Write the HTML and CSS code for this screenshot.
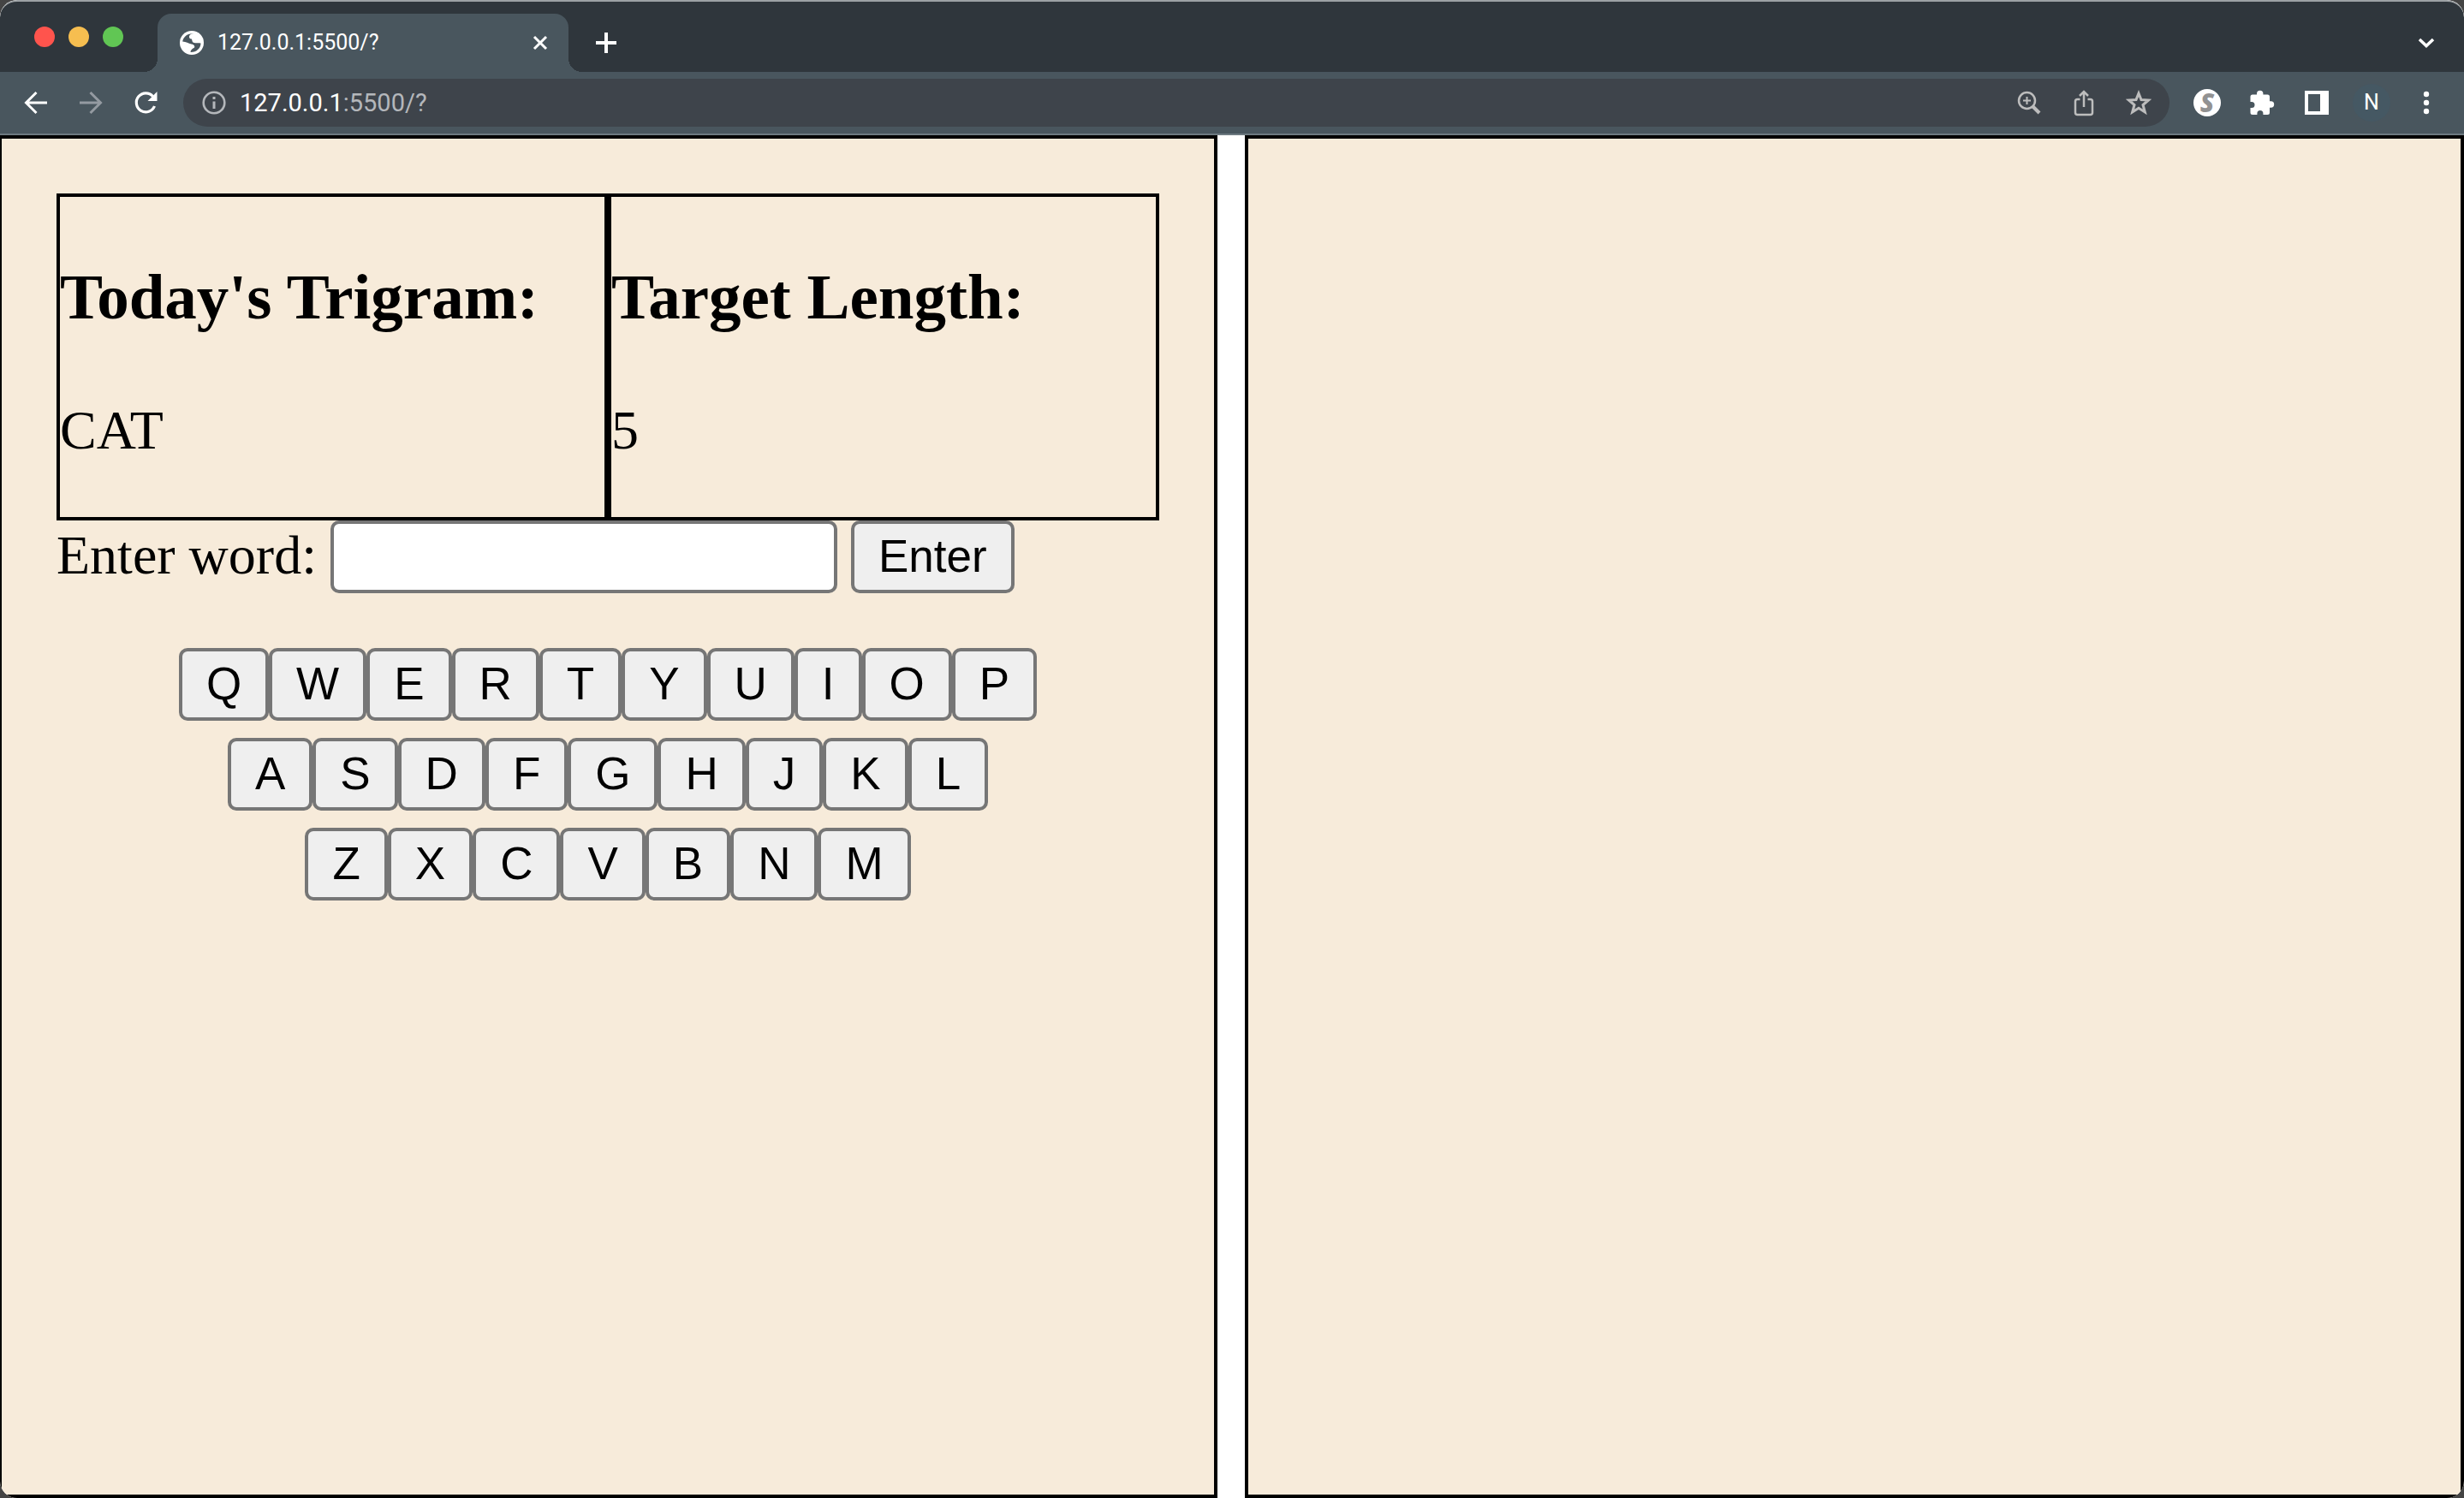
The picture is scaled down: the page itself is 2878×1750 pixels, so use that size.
FILE: index.html
```html
<!DOCTYPE html>
<html lang="en">
<head>
<meta charset="utf-8">
<title>127.0.0.1:5500/?</title>
<link rel="stylesheet" href="styles.css">
</head>
<body>
<div class="window">
  <header class="tabstrip">
    <div class="lights">
      <button class="light light-close" aria-label="Close window"></button>
      <button class="light light-min" aria-label="Minimize window"></button>
      <button class="light light-max" aria-label="Zoom window"></button>
    </div>
    <div class="tab">
      <svg class="globe" viewBox="0 0 28 28" aria-hidden="true"><circle cx="14" cy="14" r="14" fill="#fff"/><path d="M16.500 3.200C13.500 3.200 11.500 4 11 6.500C10.800 8 11.500 9.500 13.500 9.500C14.500 9.500 14 12 15.500 13.500C17.500 15 20.500 13.500 24.500 14.500C24.500 20 20 25 12.500 25C12.500 22.500 14.500 21 16.500 20C18.500 18.500 16.500 15.800 13.500 15.500C10 15 7.500 12.500 3.200 12.500C4 7 9 2.500 16.500 3.200Z" fill="#49565e"/></svg>
      <span class="tab-title">127.0.0.1:5500/?</span>
      <button class="icon-button tab-close" aria-label="Close tab"><svg width="18" height="18" viewBox="0 0 18 18"><path d="M2 2L16 16M16 2L2 16" stroke="#fff" stroke-width="3" fill="none"/></svg></button>
    </div>
    <button class="icon-button cell" aria-label="New tab"><svg width="24" height="24" viewBox="0 0 24 24"><path d="M12 0V24M0 12H24" stroke="#fff" stroke-width="4" fill="none"/></svg></button>
    <button class="icon-button cell tab-search" aria-label="Search tabs"><svg width="20" height="12" viewBox="0 0 20 12"><path d="M2 2L10 9.500L18 2" stroke="#fff" stroke-width="3.500" fill="none"/></svg></button>
  </header>

  <nav class="toolbar" aria-label="Browser">
    <div class="tools">
      <button class="icon-button cell" aria-label="Back"><svg width="28" height="28" viewBox="0 0 28 28"><path d="M27 14H3M14.500 2L2.500 14L14.500 26" stroke="#fff" stroke-width="3" fill="none"/></svg></button>
      <button class="icon-button cell" aria-label="Forward"><svg width="28" height="28" viewBox="0 0 28 28"><path d="M1 14H25M13.500 2L25.500 14L13.500 26" stroke="#949aa1" stroke-width="3" fill="none"/></svg></button>
      <button class="icon-button cell" aria-label="Reload"><svg width="28" height="28" viewBox="0 0 28 28"><path d="M22.500 6.500A11 11 0 1 0 24.500 18" stroke="#fff" stroke-width="3.200" fill="none"/><path d="M27.500 1V12H16.500Z" fill="#fff"/></svg></button>
    </div>
    <div class="omnibox">
      <svg width="28" height="28" viewBox="0 0 28 28" aria-hidden="true"><circle cx="14" cy="14" r="12.300" stroke="#b4b7bb" stroke-width="2.600" fill="none"/><path d="M14 12.500V21M14 7V10" stroke="#b4b7bb" stroke-width="3"/></svg>
      <div class="url" role="textbox" aria-label="Address" contenteditable="true" spellcheck="false"><span class="url-host">127.0.0.1</span>:5500/?</div>
      <button class="icon-button cell" aria-label="Zoom"><svg width="28" height="28" viewBox="0 0 28 28"><circle cx="11.500" cy="11.500" r="9.500" stroke="#bdbdbd" stroke-width="2.500" fill="none"/><path d="M11.500 7V16M7 11.500H16" stroke="#bdbdbd" stroke-width="2"/><path d="M18.500 18.500L26 26" stroke="#bdbdbd" stroke-width="4"/></svg></button>
      <button class="icon-button cell" aria-label="Share"><svg width="28" height="32" viewBox="0 0 28 32"><path d="M9.500 12H6.500Q4 12 4 14.500V27.500Q4 30 6.500 30H21.500Q24 30 24 27.500V14.500Q24 12 21.500 12H18.500M14 21V4M9 8L14 3L19 8" stroke="#bdbdbd" stroke-width="2.500" fill="none"/></svg></button>
      <button class="icon-button cell" aria-label="Bookmark"><svg width="30" height="30" viewBox="0 0 30 30"><path d="M15 4L18 11.500L26.500 12L20 17.500L22.300 26L15 21.300L7.700 26L10 17.500L3.500 12L12 11.500Z" stroke="#bdbdbd" stroke-width="3" fill="none"/></svg></button>
    </div>
    <div class="tools">
      <button class="icon-button cell" aria-label="S extension"><span class="s-badge">S</span></button>
      <button class="icon-button cell" aria-label="Extensions"><svg width="30" height="30" viewBox="0 0 30 30"><path d="M9 4.500A3.700 3.700 0 0 1 16.400 4.500V5.500H21.500Q24 5.500 24 8V13.300H25.500A3.700 3.700 0 0 1 25.500 20.700H24V26.500Q24 29 21.500 29H16.400V27.500A3.500 3.500 0 0 0 9.400 27.500V29H4Q1.500 29 1.500 26.500V21H3A3.500 3.500 0 0 0 3 14H1.500V8Q1.500 5.500 4 5.500H9Z" fill="#fff"/></svg></button>
      <button class="icon-button cell" aria-label="Side panel"><svg width="28" height="28" viewBox="0 0 28 28"><path fill-rule="evenodd" d="M0 0H28V28H0ZM4 4V24H18V4Z" fill="#fff"/></svg></button>
      <button class="icon-button cell" aria-label="Profile"><span class="avatar">N</span></button>
      <button class="icon-button cell" aria-label="Menu"><svg width="8" height="28" viewBox="0 0 8 28"><g fill="#fff"><circle cx="4" cy="4" r="3.200"/><circle cx="4" cy="14" r="3.200"/><circle cx="4" cy="24" r="3.200"/></g></svg></button>
    </div>
  </nav>

  <main class="page">
    <section class="panel">
      <div class="facts">
        <div class="fact"><h3>Today's Trigram:</h3><p>CAT</p></div>
        <div class="fact"><h3>Target Length:</h3><p>5</p></div>
      </div>
      <form class="entry">
        <label for="word">Enter word:</label>
        <input class="word" id="word" type="text">
        <button class="key">Enter</button>
      </form>
      <div class="keyboard">
        <div class="key-row"><button class="key">Q</button><button class="key">W</button><button class="key">E</button><button class="key">R</button><button class="key">T</button><button class="key">Y</button><button class="key">U</button><button class="key">I</button><button class="key">O</button><button class="key">P</button></div>
        <div class="key-row"><button class="key">A</button><button class="key">S</button><button class="key">D</button><button class="key">F</button><button class="key">G</button><button class="key">H</button><button class="key">J</button><button class="key">K</button><button class="key">L</button></div>
        <div class="key-row"><button class="key">Z</button><button class="key">X</button><button class="key">C</button><button class="key">V</button><button class="key">B</button><button class="key">N</button><button class="key">M</button></div>
      </div>
    </section>
    <section class="panel"></section>
  </main>
</div>
</body>
</html>
```

FILE: styles.css
```css
* { box-sizing: border-box; }

body {
  margin: 0;
  background: #444;
  font-family: "Liberation Serif", "Times New Roman", serif;
  font-size: 64px;
  line-height: 74px;
  color: #000;
}

.window {
  display: flex;
  flex-direction: column;
  min-height: 100vh;
  overflow: hidden;
  border-radius: 20px;
  background: #fff;
}

/* Browser chrome */
.tabstrip, .toolbar {
  display: flex;
  font-family: Roboto, "Liberation Sans", sans-serif;
  color: #fff;
}

.tabstrip {
  height: 84px;
  padding: 14px 12px 0 40px;
  border-top: 2px solid #9ca1a4;
  border-radius: 20px 20px 0 0;
  background: #2f363c;
}

.lights {
  display: flex;
  gap: 16px;
  width: 144px;
  padding-top: 15px;
}

.light {
  width: 24px;
  height: 24px;
  padding: 0;
  border: 0;
  border-radius: 50%;
}

.light-close { background: #ff544d; }
.light-min { background: #f6be50; }
.light-max { background: #61c654; }

.tab {
  position: relative;
  display: flex;
  align-items: center;
  gap: 16px;
  width: 480px;
  height: 68px;
  padding: 0 24px 0 26px;
  border-radius: 16px 16px 0 0;
  background: #49565e;
}

/* Flared feet where the tab meets the toolbar */
.tab::before, .tab::after {
  content: "";
  position: absolute;
  bottom: 0;
  width: 16px;
  height: 16px;
}

.tab::before {
  right: 100%;
  background: radial-gradient(circle at 0 0, #2f363c 16px, #49565e 16px);
}

.tab::after {
  left: 100%;
  background: radial-gradient(circle at 100% 0, #2f363c 16px, #49565e 16px);
}

.globe { width: 28px; height: 28px; }

.tab-title {
  flex: 1;
  font-size: 25px;
  font-weight: 400;
  line-height: 32px;
}

.icon-button {
  display: flex;
  align-items: center;
  justify-content: center;
  padding: 0;
  border: 0;
  background: none;
  color: #fff;
  font-family: inherit;
}

.cell {
  flex: none;
  width: 64px;
}

.tabstrip .cell {
  height: 68px;
  margin-left: 12px;
}

.tabstrip .tab-search { margin-left: auto; }

.toolbar {
  align-items: center;
  gap: 12px;
  height: 74px;
  padding: 0 12px 0 10px;
  border-bottom: 2px solid #6d7a80;
  background: #49565e;
}

.tools {
  display: flex;
  align-items: center;
}

.omnibox {
  flex: 1;
  display: flex;
  align-items: center;
  height: 56px;
  padding: 0 4px 0 22px;
  border-radius: 28px;
  background: #3e444b;
}

.url {
  flex: 1;
  padding-left: 16px;
  font-size: 29px;
  line-height: 36px;
  color: #b4b7bb;
}

.url-host { color: #fff; }

.s-badge, .avatar {
  display: flex;
  align-items: center;
  justify-content: center;
  border-radius: 50%;
}

.s-badge {
  width: 32px;
  height: 32px;
  background: #fff;
  color: #929292;
  font: italic 800 30px/32px "Open Sans", sans-serif;
}

.avatar {
  width: 44px;
  height: 44px;
  background: #455863;
  font: 25px/32px Roboto, sans-serif;
}

/* Game page; the left panel's outer edge sits half under the window frame */
.page {
  flex: 1;
  display: grid;
  grid-template-columns: 1fr 1fr;
  gap: 32px;
  margin-left: -2px;
}

.panel {
  padding: 64px;
  border: 4px solid #000;
  background: #f7ebda;
}

.facts {
  display: grid;
  grid-template-columns: 1fr 1fr;
}

.fact { border: 4px solid #000; }

h3 {
  margin: 74px 0 76px;
  font-size: 75px;
  line-height: 86px;
}

p { margin: 0 0 64px; }

.entry {
  display: flex;
  align-items: flex-start;
  gap: 16px;
  line-height: 82px;
}

.word, .key {
  border: 4px solid #767676;
  border-radius: 10px;
  font-family: "Liberation Sans", Arial, sans-serif;
  font-size: 53px;
  line-height: 61px;
  color: #000;
}

.word {
  width: 592px;
  height: 85px;
  padding: 8px;
  background: #fff;
}

.key {
  padding: 7px 28px 9px;
  background: #efefef;
}

.keyboard {
  display: flex;
  flex-direction: column;
  gap: 20px;
  margin-top: 64px;
}

.key-row {
  display: flex;
  justify-content: center;
}
```
